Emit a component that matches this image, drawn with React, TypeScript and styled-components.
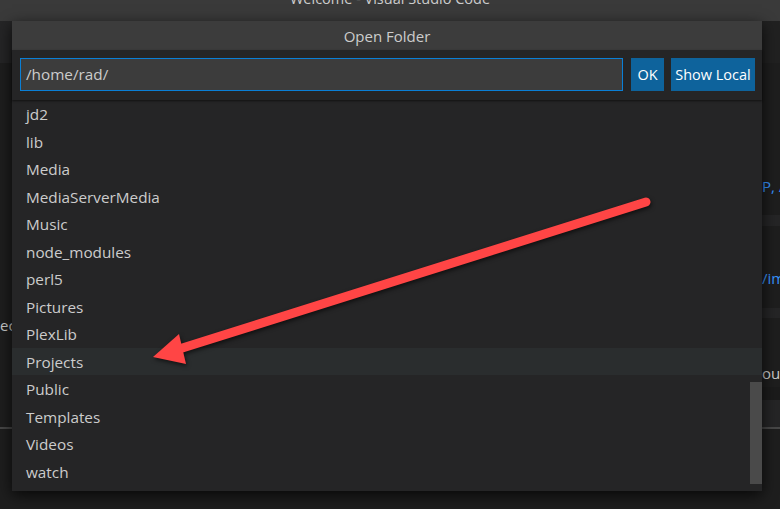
import React from 'react';
import styled, { createGlobalStyle } from 'styled-components';

const Global = createGlobalStyle`
  html, body { margin: 0; padding: 0; background: #1e1e1e; }
  body { font-family: "Open Sans", "Noto Sans", sans-serif; }
  * { box-sizing: border-box; }
`;

const Page = styled.div`
  position: relative;
  width: 780px;
  height: 509px;
  overflow: hidden;
  display: flex;
  flex-direction: column;
  background: #1e1e1e;
`;

const TitleBar = styled.div`
  flex: none;
  height: 21px;
  background: #3a3a3a;
  display: flex;
  justify-content: center;
  overflow: hidden;
`;

const TitleText = styled.div`
  margin-top: -11px;
  font-size: 14.5px;
  line-height: 20px;
  color: #cccccc;
  white-space: nowrap;
`;

const Workbench = styled.div`
  flex: 1;
  display: flex;
`;

const Column = styled.div<{ $w?: number; $pad?: number }>`
  ${(p) => (p.$w ? `width: ${p.$w}px; flex: none;` : 'flex: 1;')}
  display: flex;
  flex-direction: column;
  padding-left: ${(p) => p.$pad ?? 0}px;
  overflow: hidden;
`;

const Band = styled.div<{ $h: number; $bg?: string; $color?: string; $indent?: number }>`
  flex: none;
  height: ${(p) => p.$h}px;
  background: ${(p) => p.$bg ?? 'transparent'};
  color: ${(p) => p.$color ?? '#cccccc'};
  font-size: 15px;
  line-height: ${(p) => p.$h}px;
  padding-left: ${(p) => p.$indent ?? 0}px;
  white-space: nowrap;
`;

const Dialog = styled.div`
  position: absolute;
  left: 12px;
  top: 21px;
  width: 750px;
  height: 470px;
  background: #252526;
  display: flex;
  flex-direction: column;
  box-shadow: 0 4px 14px rgba(0, 0, 0, 0.75);
`;

const Header = styled.div`
  flex: none;
  height: 29px;
  background: #3c3c3c;
  color: #cccccc;
  font-size: 15px;
  line-height: 31px;
  text-align: center;
`;

const InputRow = styled.div`
  flex: none;
  height: 50px;
  padding: 8px 7px 0 8px;
  display: flex;
  align-items: flex-start;
  gap: 8px;
  position: relative;
  z-index: 1;
  box-shadow: 0 1px 2px rgba(0, 0, 0, 0.55);
`;

const PathInput = styled.div`
  flex: 1;
  height: 33px;
  background: #3c3c3c;
  border: 1px solid #0a7fd6;
  color: #cccccc;
  font-size: 15.3px;
  line-height: 31px;
  padding-left: 5px;
`;

const Button = styled.div<{ $w: number }>`
  flex: none;
  width: ${(p) => p.$w}px;
  height: 33px;
  background: #0e639c;
  color: #ffffff;
  font-size: 14.5px;
  line-height: 34px;
  text-align: center;
  white-space: nowrap;
`;

const Buttons = styled.div`
  display: flex;
  gap: 7px;
`;

const List = styled.div`
  flex: 1;
  position: relative;
  overflow: hidden;
`;

const Row = styled.div<{ $active?: boolean }>`
  height: 27.5px;
  line-height: 28px;
  padding-left: 14px;
  font-size: 15.3px;
  color: #cccccc;
  background: ${(p) => (p.$active ? '#2a2d2e' : 'transparent')};
`;

const Scrollbar = styled.div`
  position: absolute;
  right: 0;
  top: 282px;
  width: 12px;
  height: 102px;
  background: #4a4a4a;
`;

const Overlay = styled.svg`
  position: absolute;
  left: 0;
  top: 0;
  width: 780px;
  height: 509px;
  pointer-events: none;
  filter: drop-shadow(1px 2px 2px rgba(0, 0, 0, 0.6));
`;

const folders = [
  'jd2',
  'lib',
  'Media',
  'MediaServerMedia',
  'Music',
  'node_modules',
  'perl5',
  'Pictures',
  'PlexLib',
  'Projects',
  'Public',
  'Templates',
  'Videos',
  'watch',
];

export default function App() {
  return (
    <>
      <Global />
      <Page>
        <TitleBar>
          <TitleText>Welcome - Visual Studio Code</TitleText>
        </TitleBar>
        <Workbench>
          <Column $w={390}>
            <Band $h={42} $bg="#252526" />
            <Band $h={249} />
            <Band $h={26}>ec</Band>
            <Band $h={89} />
            <Band $h={2} $bg="#474747" />
          </Column>
          <Column $pad={351}>
            <Band $h={42} $bg="#212121" />
            <Band $h={109} />
            <Band $h={28} $color="#3794ff" $indent={1}>PHP, Azure</Band>
            <Band $h={15} />
            <Band $h={11} $bg="#252526" />
            <Band $h={38} />
            <Band $h={28} $color="#3794ff" $indent={21}>/import</Band>
            <Band $h={16} />
            <Band $h={10} $bg="#252526" />
            <Band $h={41} />
            <Band $h={28} $indent={21}>ould</Band>
            <Band $h={13} $bg="#1b1b1b" />
            <Band $h={27} $bg="#252526" />
            <Band $h={2} $bg="#474747" />
          </Column>
        </Workbench>
        <Dialog>
          <Header>Open Folder</Header>
          <InputRow>
            <PathInput>/home/rad/</PathInput>
            <Buttons>
              <Button $w={33}>OK</Button>
              <Button $w={84}>Show Local</Button>
            </Buttons>
          </InputRow>
          <List>
            {folders.map((f) => (
              <Row key={f} $active={f === 'Projects'}>
                {f}
              </Row>
            ))}
            <Scrollbar />
          </List>
        </Dialog>
        <Overlay viewBox="0 0 780 509">
          <line x1="646" y1="202" x2="176" y2="350" stroke="#ff4545" strokeWidth="9" strokeLinecap="round" />
          <polygon points="153,357 179,334 186,364" fill="#ff4545" />
        </Overlay>
      </Page>
    </>
  );
}
